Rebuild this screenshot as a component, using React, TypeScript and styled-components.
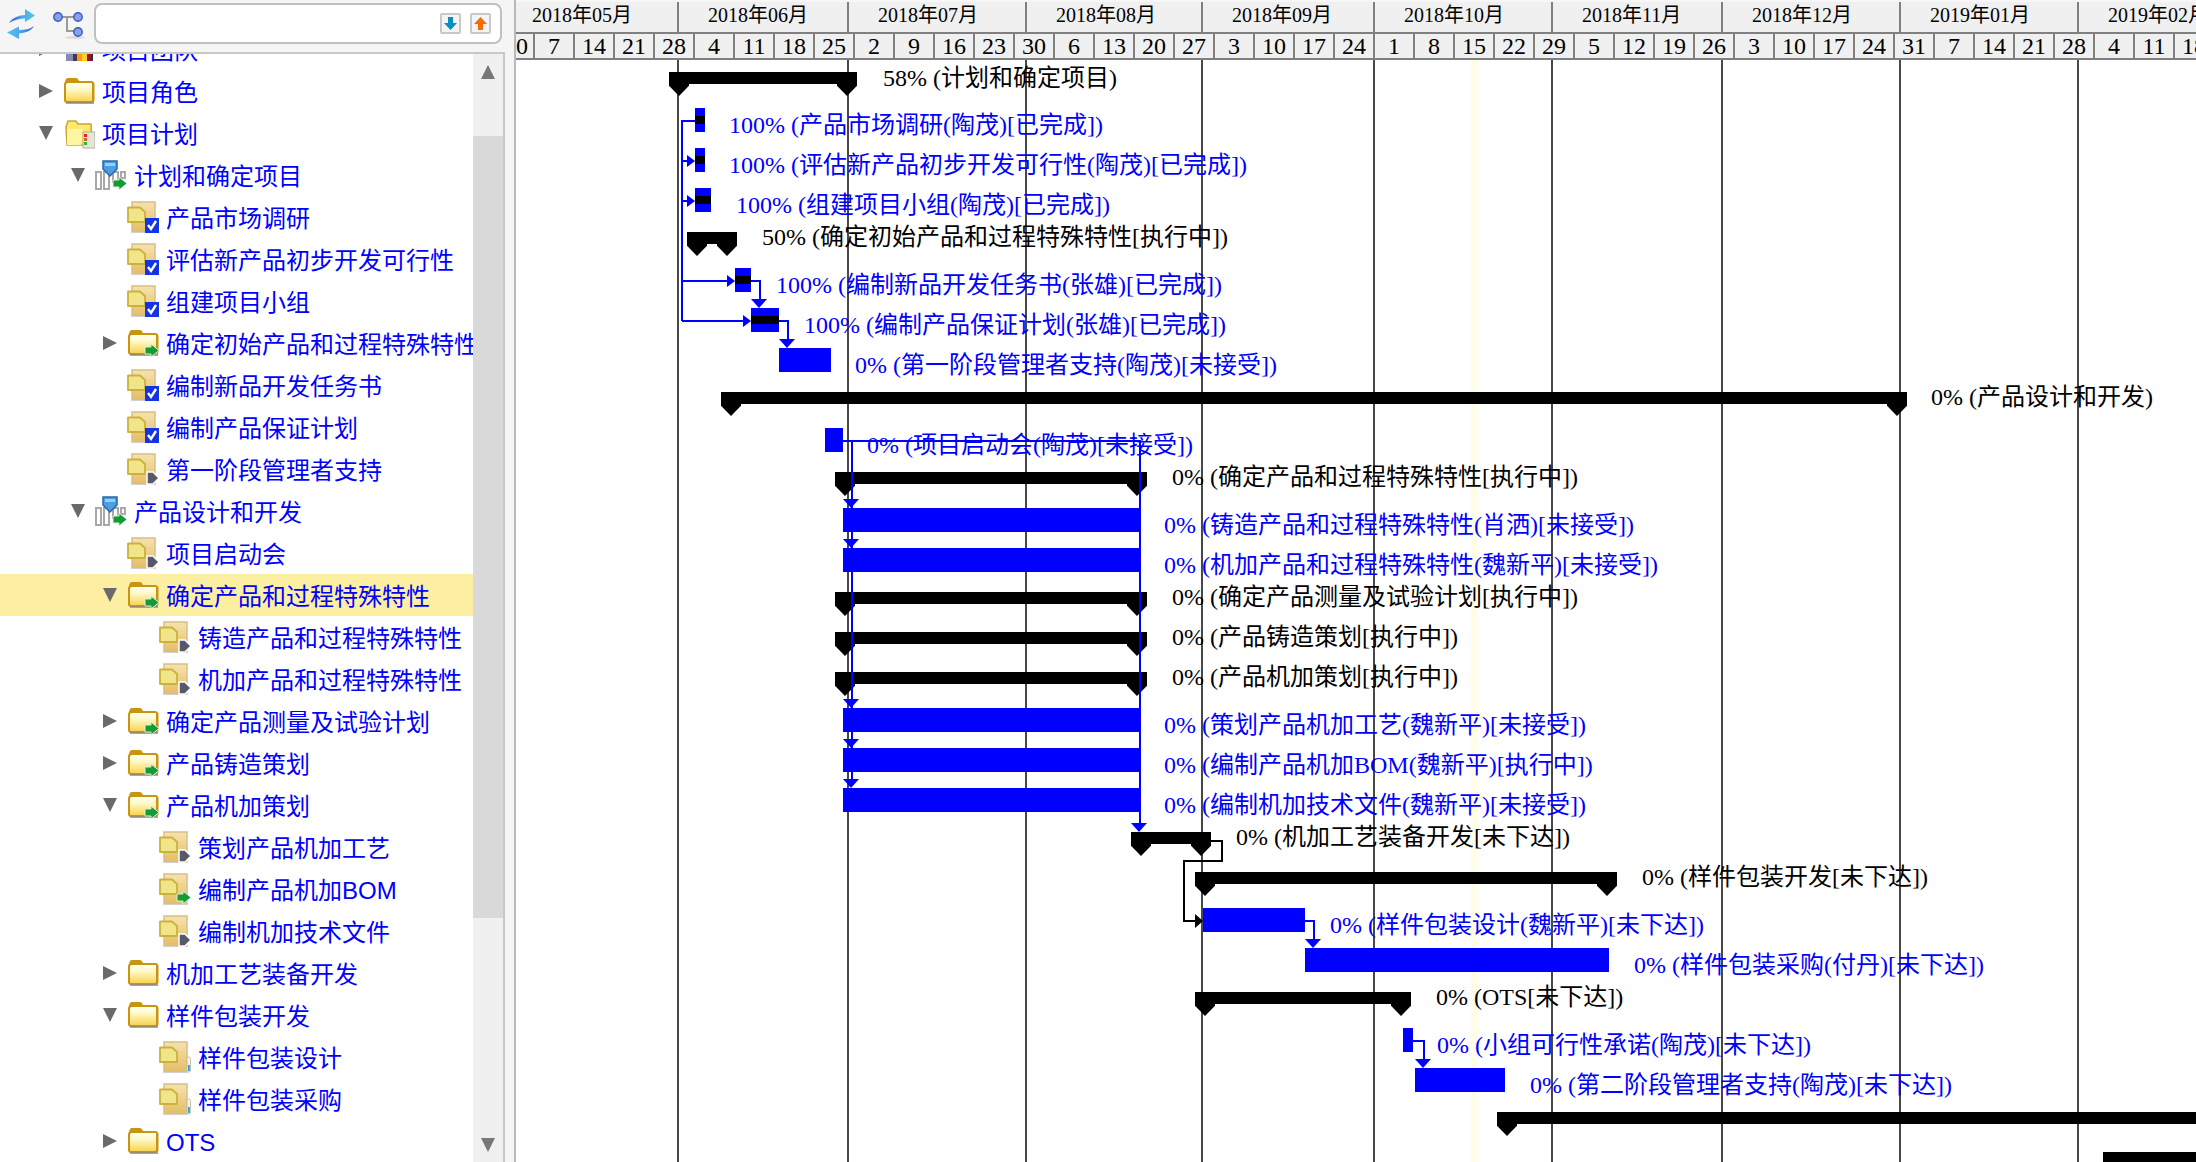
import React from 'react';
import styled, { createGlobalStyle } from 'styled-components';

const ORIGIN_X = 516;
const ORIGIN_Y = 60;
const CJK = '"Noto Sans CJK SC", sans-serif';

const Global = createGlobalStyle`
  html, body { margin: 0; padding: 0; background: #ffffff; overflow: hidden; }
  #root { width: 2196px; height: 1162px; }
`;

const Page = styled.div`
  display: flex;
  width: 2196px;
  height: 1162px;
  overflow: hidden;
  background: #f5f5f5;
`;

/* ---------- left panel ---------- */
const Sidebar = styled.aside`
  display: flex;
  flex-direction: column;
  width: 505px;
  flex: none;
`;
const Toolbar = styled.div`
  display: flex;
  align-items: flex-start;
  height: 49px;
  padding: 3px 3px 0 7px;
  background: #f5f5f5;
  border-bottom: 2px solid #c8c8c8;
  flex: none;
`;
const ToolIcon = styled.svg<{ $mr: number; $mt: number }>`
  flex: none;
  margin-right: ${p => p.$mr}px;
  margin-top: ${p => p.$mt}px;
`;
const SearchBox = styled.div`
  display: flex;
  align-items: center;
  justify-content: flex-end;
  gap: 9px;
  box-sizing: border-box;
  width: 408px;
  height: 41px;
  padding-right: 9px;
  background: #ffffff;
  border: 2px solid #c0c0c0;
  border-radius: 8px;
`;
const SearchButton = styled.button`
  display: flex;
  align-items: center;
  justify-content: center;
  box-sizing: border-box;
  width: 21px;
  height: 21px;
  padding: 0;
  background: #f4f4f4;
  border: 2px solid #c8c8c8;
  border-radius: 2px;
`;
const TreeArea = styled.div`
  display: flex;
  flex: 1;
  min-height: 0;
  background: #ffffff;
  border-right: 2px solid #c8c8c8;
`;
const TreeViewport = styled.div`
  flex: 1;
  min-width: 0;
  overflow: hidden;
`;
const TreeList = styled.ul`
  list-style: none;
  margin: -26px 0 0;
  padding: 0;
`;
const TreeRow = styled.li<{ $level: number; $selected?: boolean }>`
  display: flex;
  align-items: center;
  height: 42px;
  padding-left: ${p => 39 + p.$level * 32}px;
  background: ${p => (p.$selected ? '#fdefa2' : 'transparent')};
`;
const ExpanderSlot = styled.span`
  display: block;
  width: 24px;
  flex: none;
`;
const Expander = styled.span<{ $dir: 'right' | 'down' }>`
  display: block;
  width: 14px;
  height: 14px;
  background: #6a6a6a;
  clip-path: ${p =>
    p.$dir === 'down' ? 'polygon(0 0, 100% 0, 50% 100%)' : 'polygon(0 0, 100% 50%, 0 100%)'};
`;
const TreeIcon = styled.svg`
  display: block;
  flex: none;
  margin-right: 7px;
`;
const TreeText = styled.span`
  display: block;
  padding-top: 4px;
  font-family: "Liberation Sans", ${CJK};
  font-size: 24px;
  line-height: 42px;
  color: #0000ff;
  white-space: nowrap;
`;
const Scrollbar = styled.div`
  display: flex;
  flex-direction: column;
  align-items: center;
  justify-content: space-between;
  position: relative;
  width: 30px;
  flex: none;
  background: #f0f0f0;
`;
const ScrollThumb = styled.div`
  position: absolute;
  left: 0;
  right: 0;
  top: 82px;
  height: 782px;
  background: #d9d9d9;
`;
const ScrollArrow = styled.span<{ $up?: boolean }>`
  display: block;
  width: 14px;
  height: 14px;
  margin: ${p => (p.$up ? '11px 0 0' : '0 0 10px')};
  background: #777777;
  position: relative;
  z-index: 1;
  clip-path: ${p =>
    p.$up ? 'polygon(50% 0, 100% 100%, 0 100%)' : 'polygon(0 0, 100% 0, 50% 100%)'};
`;
const Splitter = styled.div`
  width: 9px;
  flex: none;
  background: #f5f5f5;
  border-right: 2px solid #b8b8b8;
`;

/* ---------- gantt ---------- */
const Gantt = styled.section`
  display: flex;
  flex-direction: column;
  flex: 1;
  min-width: 0;
  background: #ffffff;
`;
const Header = styled.header`
  flex: none;
  padding-top: 2px;
  background: #f7f7f7;
  font-family: "Liberation Serif", ${CJK};
  color: #000000;
`;
const MonthRow = styled.div`
  display: flex;
  height: 30px;
  background: #f0f0f0;
  border-bottom: 2px solid #808080;
`;
const MonthCell = styled.div<{ $w?: number; $pad: number }>`
  box-sizing: border-box;
  flex: none;
  width: ${p => (p.$w ? `${p.$w}px` : 'auto')};
  padding-left: ${p => p.$pad}px;
  border-right: 2px solid #808080;
  font-size: 20px;
  line-height: 27px;
  white-space: nowrap;
`;
const WeekRow = styled.div`
  display: flex;
  height: 24px;
  background: #f0f0f0;
  border-bottom: 2px solid #808080;
`;
const WeekCell = styled.div<{ $first?: boolean }>`
  box-sizing: border-box;
  flex: none;
  display: flex;
  justify-content: ${p => (p.$first ? 'flex-end' : 'center')};
  width: ${p => (p.$first ? 19 : 40)}px;
  overflow: hidden;
  padding-right: ${p => (p.$first ? 5 : 0)}px;
  border-right: 2px solid #808080;
  font-size: 24px;
  line-height: 24px;
`;
const Canvas = styled.div`
  position: relative;
  flex: 1;
  min-height: 0;
  overflow: hidden;
  background: #ffffff;
`;
const TodayLine = styled.div<{ $x: number }>`
  position: absolute;
  top: 0;
  bottom: 0;
  left: ${p => p.$x}px;
  width: 6px;
  background: #fffde6;
`;
const MonthLine = styled.div<{ $x: number }>`
  position: absolute;
  top: 0;
  bottom: 0;
  left: ${p => p.$x}px;
  width: 2px;
  background: #484848;
`;
const Placed = styled.div.attrs<{ $x: number; $y: number; $w?: number }>(p => ({
  style: { left: p.$x - ORIGIN_X, top: p.$y - ORIGIN_Y, width: p.$w },
}))<{ $x: number; $y: number; $w?: number }>`
  position: absolute;
`;
const TaskBar = styled(Placed)`
  display: flex;
  align-items: center;
  height: 24px;
  background: #0000ff;
`;
const DoneBand = styled.div`
  width: 100%;
  height: 8px;
  background: #000000;
`;
const SummaryBar = styled(Placed)`
  height: 12px;
  background: #000000;
  &::before,
  &::after {
    content: '';
    position: absolute;
    top: 12px;
    width: 20px;
    height: 12px;
    background: #000000;
    clip-path: polygon(0 0, 100% 0, 100% 15%, 50% 100%, 0 15%);
  }
  &::before { left: 0; }
  &::after { right: 0; }
`;
const BarLabel = styled(Placed)<{ $blue?: boolean }>`
  font-family: "Liberation Serif", ${CJK};
  font-size: 24px;
  line-height: 30px;
  white-space: nowrap;
  color: ${p => (p.$blue ? '#0000ff' : '#000000')};
`;
const Links = styled.svg`
  position: absolute;
  left: 0;
  top: 0;
  overflow: visible;
  pointer-events: none;
`;

/* ---------- drawings ---------- */
const RefreshIcon = () => (
  <ToolIcon width={30} height={34} viewBox="0 0 30 34" $mr={16} $mt={5}>
    <defs>
      <linearGradient id="rf" x1="0" x2="1">
        <stop offset="0" stopColor="#2f56e0" />
        <stop offset="0.5" stopColor="#4aa8ee" />
        <stop offset="1" stopColor="#50c8e8" />
      </linearGradient>
      <linearGradient id="rf2" x1="1" x2="0">
        <stop offset="0" stopColor="#2f56e0" />
        <stop offset="0.5" stopColor="#4aa8ee" />
        <stop offset="1" stopColor="#50c8e8" />
      </linearGradient>
    </defs>
    <path d="M2 15 C6 9 12 7.5 18 7 L18 1 L28 7.5 L18 14 L18 10.5 C12 10.5 7 12 2 15 Z" fill="url(#rf)" />
    <path d="M27 18 C24 23 18 25 12 25.5 L12 31 L0 24.5 L12 18.5 L12 22 C18 22 23 21 27 18 Z" fill="url(#rf2)" />
  </ToolIcon>
);
const NetworkIcon = () => (
  <ToolIcon width={32} height={30} viewBox="0 0 32 30" $mr={9} $mt={8}>
    <ellipse cx="22" cy="26.5" rx="10" ry="1.5" fill="#dcdcdc" />
    <path d="M5 6 H25 M14 6 V20 H25" fill="none" stroke="#9a9a9a" strokeWidth="2" />
    {[[5, 6], [25, 6], [25, 21]].map(([x, y]) => (
      <circle key={`${x}-${y}`} cx={x} cy={y} r="4.2" fill="#86a0ea" stroke="#3a56c4" strokeWidth="1.4" />
    ))}
  </ToolIcon>
);
const ArrowGlyph = ({ color, up }: { color: string; up?: boolean }) => (
  <svg width="15" height="15" viewBox="0 0 15 15">
    <path d={up ? 'M7.5 1 L14 8 H10 V14 H5 V8 H1 Z' : 'M7.5 14 L14 7 H10 V1 H5 V7 H1 Z'} fill={color} />
  </svg>
);

const GreenArrow = ({ x = 18, y = 17 }: { x?: number; y?: number }) => (
  <g transform={`translate(${x} ${y})`}>
    <path d="M0 3 H6 V0 L14 6.5 L6 13 V10 H0 Z" fill="#169a34" stroke="#d8f2dc" strokeWidth="1" />
  </g>
);
const FolderShape = () => (
  <>
    <path d="M1 9 L3 4 Q3.5 3 5 3 H13 Q14.5 3 15.5 5 L16 6 H28 Q31 6 31.5 9 V25 Q31.5 28 28 28 H4 Q1 28 1 25 Z" fill="#c9940f" />
    <path d="M3 10 Q3 8 5 8 H29 V25 Q29 26 28 26 H4 Q3 26 3 25 Z" fill="url(#fold)" />
    <path d="M3 28 H31" stroke="#8a8a8a" strokeWidth="1.5" />
  </>
);
const FolderDefs = () => (
  <defs>
    <linearGradient id="fold" x1="0" x2="0" y1="0" y2="1">
      <stop offset="0" stopColor="#fffff2" />
      <stop offset="0.35" stopColor="#fff9c8" />
      <stop offset="1" stopColor="#f7d452" />
    </linearGradient>
    <linearGradient id="pg" x1="0" x2="0" y1="0" y2="1">
      <stop offset="0" stopColor="#f6e2ae" />
      <stop offset="1" stopColor="#e6bd66" />
    </linearGradient>
  </defs>
);
const DocShape = () => (
  <>
    <rect x="5" y="1" width="23" height="30" fill="url(#pg)" stroke="#d8bf84" strokeWidth="1.5" />
    <path d="M1 6.5 H13 L18 11 V21 H1 Z" fill="#f2e488" stroke="#c9b23e" strokeWidth="1.8" strokeLinejoin="round" />
    <path d="M5 31.5 H27" stroke="#cfcfcf" strokeWidth="1" />
  </>
);

type IconKind = 'folder' | 'folderGo' | 'plan' | 'chart' | 'docDone' | 'docIdle' | 'docGo' | 'docTherm' | 'team';

const NodeIcon = ({ kind }: { kind: IconKind }) => {
  const body = () => {
    switch (kind) {
      case 'folder':
        return <FolderShape />;
      case 'folderGo':
        return (
          <>
            <FolderShape />
            <GreenArrow />
          </>
        );
      case 'plan':
        return (
          <>
            <path d="M3 10 L5 4 H13 L15 7 H28 L29 28 H4 Z" fill="#ffe96a" stroke="#c9a63a" strokeWidth="1.5" />
            <path d="M4 12 H20 L18 28 H4 Z" fill="#fff6a0" />
            <rect x="20" y="15" width="12" height="16" fill="#e8e4d8" stroke="#b4b098" />
            <rect x="21" y="17" width="3" height="3" fill="#e82020" />
            <rect x="21" y="21" width="3" height="3" fill="#e06020" />
            <rect x="21" y="25" width="3" height="3" fill="#20c040" />
          </>
        );
      case 'chart':
        return (
          <>
            <g fill="none" stroke="#a8a8a8" strokeWidth="2">
              <rect x="1" y="13" width="5" height="17" />
              <rect x="9" y="13" width="5" height="17" />
              <rect x="18" y="13" width="5" height="10" />
              <rect x="26" y="13" width="4" height="6" />
            </g>
            <path d="M8 2 H22 V10 L15 17 L8 10 Z" fill="#4c9ee4" stroke="#2868a8" strokeWidth="1.5" />
            <path d="M10 4 H20 V7 H10 Z" fill="#9ccff2" />
            <GreenArrow x={18} y={18} />
          </>
        );
      case 'docDone':
        return (
          <>
            <DocShape />
            <rect x="18" y="17" width="14" height="15" fill="#1234e4" />
            <path d="M21 24 L24 28 L29 20" fill="none" stroke="#ffffff" strokeWidth="2.4" />
          </>
        );
      case 'docIdle':
        return (
          <>
            <DocShape />
            <path d="M20 19 H26 L32 25 L26 31 H20 Z" fill="#58586a" stroke="#ffffff" strokeWidth="1.5" />
          </>
        );
      case 'docGo':
        return (
          <>
            <DocShape />
            <GreenArrow x={18} y={18} />
          </>
        );
      case 'docTherm':
        return (
          <>
            <DocShape />
            <rect x="28" y="16" width="3.5" height="15" rx="1.5" fill="#f4f4f4" stroke="#c0b890" strokeWidth="0.8" />
            <rect x="29" y="24" width="1.8" height="6" fill="#20a0e8" />
          </>
        );
      case 'team':
        return (
          <>
            <rect x="3" y="8" width="7" height="20" fill="#8a88b8" />
            <rect x="10" y="8" width="4" height="20" fill="#40385c" />
            <rect x="14" y="8" width="5" height="20" fill="#ff9a10" />
            <rect x="19" y="8" width="5" height="20" fill="#ffd020" />
            <rect x="24" y="8" width="4" height="20" fill="#a01030" />
            <rect x="28" y="8" width="2" height="20" fill="#303030" />
          </>
        );
    }
  };
  return (
    <TreeIcon width={32} height={32} viewBox="0 0 32 32">
      <FolderDefs />
      {body()}
    </TreeIcon>
  );
};

/* ---------- data ---------- */
type Node = { t: string; l: number; k: IconKind; e?: 'right' | 'down'; sel?: boolean };
const nodes: Node[] = [
  { t: '项目团队', l: 0, k: 'team', e: 'right' },
  { t: '项目角色', l: 0, k: 'folder', e: 'right' },
  { t: '项目计划', l: 0, k: 'plan', e: 'down' },
  { t: '计划和确定项目', l: 1, k: 'chart', e: 'down' },
  { t: '产品市场调研', l: 2, k: 'docDone' },
  { t: '评估新产品初步开发可行性', l: 2, k: 'docDone' },
  { t: '组建项目小组', l: 2, k: 'docDone' },
  { t: '确定初始产品和过程特殊特性', l: 2, k: 'folderGo', e: 'right' },
  { t: '编制新品开发任务书', l: 2, k: 'docDone' },
  { t: '编制产品保证计划', l: 2, k: 'docDone' },
  { t: '第一阶段管理者支持', l: 2, k: 'docIdle' },
  { t: '产品设计和开发', l: 1, k: 'chart', e: 'down' },
  { t: '项目启动会', l: 2, k: 'docIdle' },
  { t: '确定产品和过程特殊特性', l: 2, k: 'folderGo', e: 'down', sel: true },
  { t: '铸造产品和过程特殊特性', l: 3, k: 'docIdle' },
  { t: '机加产品和过程特殊特性', l: 3, k: 'docIdle' },
  { t: '确定产品测量及试验计划', l: 2, k: 'folderGo', e: 'right' },
  { t: '产品铸造策划', l: 2, k: 'folderGo', e: 'right' },
  { t: '产品机加策划', l: 2, k: 'folderGo', e: 'down' },
  { t: '策划产品机加工艺', l: 3, k: 'docIdle' },
  { t: '编制产品机加BOM', l: 3, k: 'docGo' },
  { t: '编制机加技术文件', l: 3, k: 'docIdle' },
  { t: '机加工艺装备开发', l: 2, k: 'folder', e: 'right' },
  { t: '样件包装开发', l: 2, k: 'folder', e: 'down' },
  { t: '样件包装设计', l: 3, k: 'docTherm' },
  { t: '样件包装采购', l: 3, k: 'docTherm' },
  { t: 'OTS', l: 2, k: 'folder', e: 'right' },
];

const months: { t: string; w?: number; pad: number }[] = [
  { t: '2018年05月', w: 163, pad: 16 },
  { t: '2018年06月', w: 170, pad: 29 },
  { t: '2018年07月', w: 178, pad: 29 },
  { t: '2018年08月', w: 176, pad: 29 },
  { t: '2018年09月', w: 172, pad: 29 },
  { t: '2018年10月', w: 178, pad: 29 },
  { t: '2018年11月', w: 170, pad: 29 },
  { t: '2018年12月', w: 178, pad: 29 },
  { t: '2019年01月', w: 178, pad: 29 },
  { t: '2019年02月', pad: 29 },
];
const weeks = [30, 7, 14, 21, 28, 4, 11, 18, 25, 2, 9, 16, 23, 30, 6, 13, 20, 27, 3, 10, 17, 24, 1, 8, 15, 22, 29, 5, 12, 19, 26, 3, 10, 17, 24, 31, 7, 14, 21, 28, 4, 11, 18];
const monthLines = [677, 847, 1025, 1201, 1373, 1551, 1721, 1899, 2077];

const tasks = [
  { x: 695, y: 108, w: 10, done: true },
  { x: 695, y: 148, w: 10, done: true },
  { x: 695, y: 188, w: 16, done: true },
  { x: 735, y: 268, w: 16, done: true },
  { x: 751, y: 308, w: 28, done: true },
  { x: 779, y: 348, w: 52 },
  { x: 825, y: 428, w: 18 },
  { x: 843, y: 508, w: 297 },
  { x: 843, y: 548, w: 297 },
  { x: 843, y: 708, w: 297 },
  { x: 843, y: 748, w: 297 },
  { x: 843, y: 788, w: 297 },
  { x: 1203, y: 908, w: 102 },
  { x: 1305, y: 948, w: 304 },
  { x: 1403, y: 1028, w: 10 },
  { x: 1415, y: 1068, w: 90 },
];
const summaries = [
  { x: 669, y: 72, w: 188 },
  { x: 687, y: 232, w: 50 },
  { x: 721, y: 392, w: 1186 },
  { x: 835, y: 472, w: 312 },
  { x: 835, y: 592, w: 312 },
  { x: 835, y: 632, w: 312 },
  { x: 835, y: 672, w: 312 },
  { x: 1131, y: 832, w: 80 },
  { x: 1195, y: 872, w: 422 },
  { x: 1195, y: 992, w: 216 },
  { x: 1497, y: 1112, w: 800 },
  { x: 2103, y: 1152, w: 200 },
];
const labels: { t: string; x: number; c: number; b?: boolean }[] = [
  { t: '58% (计划和确定项目)', x: 883, c: 78 },
  { t: '100% (产品市场调研(陶茂)[已完成])', x: 729, c: 125, b: true },
  { t: '100% (评估新产品初步开发可行性(陶茂)[已完成])', x: 729, c: 165, b: true },
  { t: '100% (组建项目小组(陶茂)[已完成])', x: 736, c: 205, b: true },
  { t: '50% (确定初始产品和过程特殊特性[执行中])', x: 762, c: 237 },
  { t: '100% (编制新品开发任务书(张雄)[已完成])', x: 776, c: 285, b: true },
  { t: '100% (编制产品保证计划(张雄)[已完成])', x: 804, c: 325, b: true },
  { t: '0% (第一阶段管理者支持(陶茂)[未接受])', x: 855, c: 365, b: true },
  { t: '0% (产品设计和开发)', x: 1931, c: 397 },
  { t: '0% (项目启动会(陶茂)[未接受])', x: 867, c: 445, b: true },
  { t: '0% (确定产品和过程特殊特性[执行中])', x: 1172, c: 477 },
  { t: '0% (铸造产品和过程特殊特性(肖洒)[未接受])', x: 1164, c: 525, b: true },
  { t: '0% (机加产品和过程特殊特性(魏新平)[未接受])', x: 1164, c: 565, b: true },
  { t: '0% (确定产品测量及试验计划[执行中])', x: 1172, c: 597 },
  { t: '0% (产品铸造策划[执行中])', x: 1172, c: 637 },
  { t: '0% (产品机加策划[执行中])', x: 1172, c: 677 },
  { t: '0% (策划产品机加工艺(魏新平)[未接受])', x: 1164, c: 725, b: true },
  { t: '0% (编制产品机加BOM(魏新平)[执行中])', x: 1164, c: 765, b: true },
  { t: '0% (编制机加技术文件(魏新平)[未接受])', x: 1164, c: 805, b: true },
  { t: '0% (机加工艺装备开发[未下达])', x: 1236, c: 837 },
  { t: '0% (样件包装开发[未下达])', x: 1642, c: 877 },
  { t: '0% (样件包装设计(魏新平)[未下达])', x: 1330, c: 925, b: true },
  { t: '0% (样件包装采购(付丹)[未下达])', x: 1634, c: 965, b: true },
  { t: '0% (OTS[未下达])', x: 1436, c: 997 },
  { t: '0% (小组可行性承诺(陶茂)[未下达])', x: 1437, c: 1045, b: true },
  { t: '0% (第二阶段管理者支持(陶茂)[未下达])', x: 1530, c: 1085, b: true },
];

const bluePaths = [
  'M682 121 H695 M682 120 V321 M682 161 H688 M682 201 H688 M682 281 H728 M682 321 H744',
  'M751 281 H760 V301 M779 321 H788 V341',
  'M843 441 H1140 V823 M852 441 V780',
  'M1305 921 H1314 V941 M1413 1041 H1424 V1061',
];
const rightArrows = [[695, 161], [695, 201], [735, 281], [751, 321]];
const downArrows = [[759, 308], [787, 348], [851, 508], [851, 548], [851, 708], [851, 748], [851, 788], [1139, 832], [1313, 948], [1423, 1068]];

const App = () => (
  <Page>
    <Global />
    <Sidebar>
      <Toolbar>
        <RefreshIcon />
        <NetworkIcon />
        <SearchBox>
          <SearchButton aria-label="next"><ArrowGlyph color="#0790c8" /></SearchButton>
          <SearchButton aria-label="previous"><ArrowGlyph color="#ff6a00" up /></SearchButton>
        </SearchBox>
      </Toolbar>
      <TreeArea>
        <TreeViewport>
          <TreeList>
            {nodes.map(n => (
              <TreeRow key={n.t} $level={n.l} $selected={n.sel}>
                <ExpanderSlot>{n.e && <Expander $dir={n.e} />}</ExpanderSlot>
                <NodeIcon kind={n.k} />
                <TreeText>{n.t}</TreeText>
              </TreeRow>
            ))}
          </TreeList>
        </TreeViewport>
        <Scrollbar>
          <ScrollThumb />
          <ScrollArrow $up />
          <ScrollArrow />
        </Scrollbar>
      </TreeArea>
    </Sidebar>
    <Splitter />
    <Gantt>
      <Header>
        <MonthRow>
          {months.map(m => (
            <MonthCell key={m.t} $w={m.w} $pad={m.pad}>{m.t}</MonthCell>
          ))}
        </MonthRow>
        <WeekRow>
          {weeks.map((w, i) => (
            <WeekCell key={i} $first={i === 0}>{w}</WeekCell>
          ))}
        </WeekRow>
      </Header>
      <Canvas>
        <TodayLine $x={1471 - ORIGIN_X} />
        {monthLines.map(x => (
          <MonthLine key={x} $x={x - ORIGIN_X} />
        ))}
        {labels.map(l => (
          <BarLabel key={l.t} $x={l.x} $y={l.c - 15} $blue={l.b}>{l.t}</BarLabel>
        ))}
        {summaries.map(s => (
          <SummaryBar key={`${s.x}-${s.y}`} $x={s.x} $y={s.y} $w={s.w} />
        ))}
        {tasks.map(t => (
          <TaskBar key={`${t.x}-${t.y}`} $x={t.x} $y={t.y} $w={t.w}>
            {t.done && <DoneBand />}
          </TaskBar>
        ))}
        <Links width={1680} height={1102} viewBox={`${ORIGIN_X} ${ORIGIN_Y} 1680 1102`}>
          <g fill="none" stroke="#0000ff" strokeWidth="2">
            {bluePaths.map(d => <path key={d} d={d} />)}
          </g>
          <g fill="#0000ff">
            {rightArrows.map(([x, y]) => (
              <path key={`${x}-${y}`} d={`M${x - 8} ${y - 6} V${y + 6} L${x} ${y} Z`} />
            ))}
            {downArrows.map(([x, y]) => (
              <path key={`${x}-${y}`} d={`M${x - 8} ${y - 9} H${x + 8} L${x} ${y} Z`} />
            ))}
          </g>
          <path d="M1211 841 H1222 V861 H1184 V921 H1195" fill="none" stroke="#000000" strokeWidth="2" />
          <path d="M1195 914 V928 L1203 921 Z" fill="#000000" />
        </Links>
      </Canvas>
    </Gantt>
  </Page>
);

export default App;
